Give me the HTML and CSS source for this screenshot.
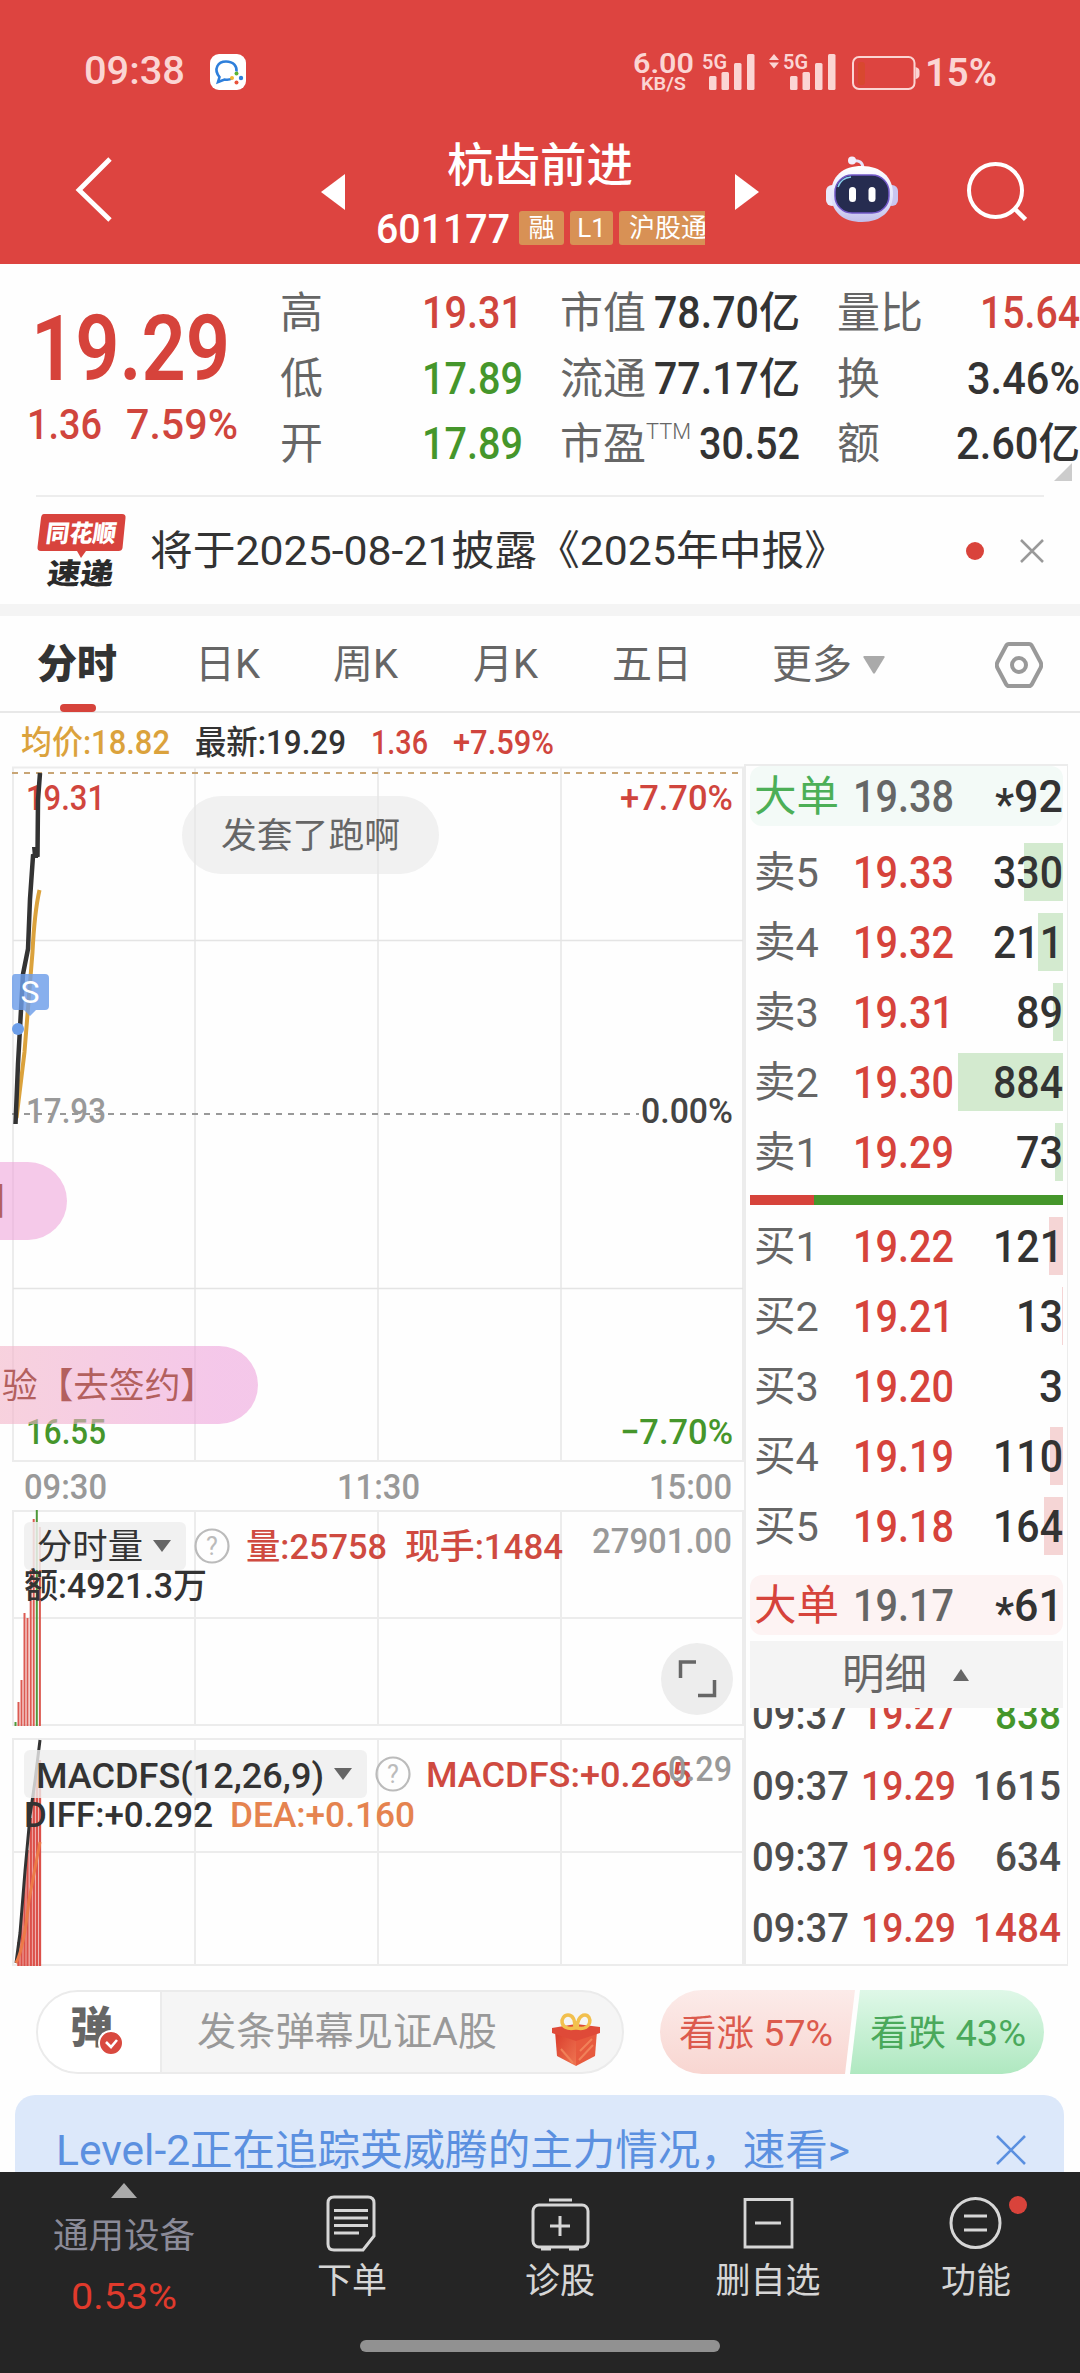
FILE: index.html
```html
<!DOCTYPE html>
<html lang="zh-CN">
<head>
<meta charset="utf-8">
<title>杭齿前进 601177</title>
<link rel="stylesheet" href="styles.css">
</head>
<body>
<header class="top">
  <div class="status">
    <span class="clock" data-w="101">09:38</span>
    <svg class="app-icon" viewBox="0 0 36 36"><rect width="36" height="36" rx="9" fill="#fff"/><path d="M22 24.500c-2 1.200-5 1.500-7.500 1L8 28l1.500-5C3 15 8 7.500 16 7.500c8 0 11 5 10.500 10" fill="none" stroke="#2e7fdb" stroke-width="2.600"/><circle cx="26.500" cy="19.500" r="2" fill="#5bb531"/><circle cx="31" cy="24" r="2.200" fill="#2e7fdb"/><circle cx="26.500" cy="28.500" r="2" fill="#e8523a"/><circle cx="22" cy="24" r="2" fill="#f2b632"/></svg>
    <svg class="signals" viewBox="630 46 370 50">
      <g fill="#fbd5d3" font-weight="600">
        <text x="633" y="73" font-size="28" textLength="61" lengthAdjust="spacingAndGlyphs">6.00</text>
        <text x="641" y="90" font-size="19" textLength="45" lengthAdjust="spacingAndGlyphs">KB/S</text>
        <text x="702" y="68.500" font-size="20.500" textLength="25" lengthAdjust="spacingAndGlyphs">5G</text>
        <text x="783" y="68.500" font-size="20.500" textLength="25" lengthAdjust="spacingAndGlyphs">5G</text>
        <text x="925" y="86" font-size="38" textLength="72" lengthAdjust="spacingAndGlyphs">15%</text>
        <rect x="709" y="76" width="7.500" height="14" rx="1.500"/><rect x="721.500" y="72" width="7.500" height="18" rx="1.500"/><rect x="734" y="63" width="7.500" height="27" rx="1.500"/><rect x="747" y="54" width="7.500" height="36" rx="1.500"/>
        <rect x="790" y="76" width="7.500" height="14" rx="1.500"/><rect x="802.500" y="72" width="7.500" height="18" rx="1.500"/><rect x="815" y="63" width="7.500" height="27" rx="1.500"/><rect x="828" y="54" width="7.500" height="36" rx="1.500"/>
        <path d="M769 60l5-6 5 6zM769 62.500l5 6 5-6z"/>
        <path d="M915.500 67q4 1 4 4v4q0 3-4 4z"/>
      </g>
      <rect x="853" y="57" width="61.500" height="32" rx="6" fill="none" stroke="#fbd5d3" stroke-width="2"/>
      <rect x="858" y="62" width="7" height="23" rx="3" fill="#d8482f"/>
    </svg>
  </div>
  <div class="nav">
    <svg class="back" viewBox="0 0 44 70"><path d="M40 5L9 36l31 30" fill="none" stroke="#fff" stroke-width="4.800"/></svg>
    <svg class="tri" viewBox="0 0 24 36"><path d="M24 0v36L0 18z" fill="#fff"/></svg>
    <div class="stock">
      <h1 data-w="186">杭齿前进</h1>
      <div class="sub"><span class="code" data-w="134">601177</span><i>融</i><i>L1</i><i class="cut">沪股通</i></div>
    </div>
    <svg class="tri right" viewBox="0 0 24 36"><path d="M0 0v36l24-18z" fill="#fff"/></svg>
    <svg class="robot" viewBox="0 0 72 68">
      <defs><linearGradient id="shell" x1="0" y1="0" x2="0" y2="1"><stop offset="0" stop-color="#fff"/><stop offset=".65" stop-color="#dfe0fa"/><stop offset="1" stop-color="#c1bdea"/></linearGradient></defs>
      <path d="M27 5c6-1 10 1 10 8" fill="none" stroke="#e6e4fa" stroke-width="3"/><circle cx="26" cy="4.500" r="4" fill="#f4eefc"/>
      <rect x="0" y="29" width="12" height="21" rx="6" fill="#e9e9fb"/><rect x="60" y="29" width="12" height="21" rx="6" fill="#c9c5f0"/>
      <path d="M36 10C55 10 67 21 67 38S55 66 36 66 5 56 5 38 17 10 36 10z" fill="url(#shell)"/>
      <rect x="9" y="19" width="54" height="38" rx="17" fill="#262c50" stroke="#7258c8" stroke-width="1.500"/>
      <path d="M12 31q3-9 13-10" fill="none" stroke="#8ad1ef" stroke-width="1.500"/>
      <rect x="23" y="31" width="7" height="15" rx="3.500" fill="#fff"/><rect x="42.500" y="31" width="7" height="15" rx="3.500" fill="#fff"/>
    </svg>
    <svg class="search" viewBox="0 0 62 62"><circle cx="30.500" cy="29.500" r="26.500" fill="none" stroke="#fff" stroke-width="4"/><path d="M50 48l10.500 10.500" stroke="#fff" stroke-width="4.500"/></svg>
  </div>
</header>

<section class="quote">
  <div class="last">
    <strong data-w="199">19.29</strong>
    <div class="change"><span data-w="75">1.36</span><span data-w="112">7.59%</span></div>
  </div>
  <div class="stats">
    <label>高</label><b class="up" data-w="101">19.31</b><label>市值</label><b data-w="146">78.70亿</b><label>量比</label><b class="up" data-w="100">15.64</b>
    <label>低</label><b class="down" data-w="101">17.89</b><label>流通</label><b data-w="146">77.17亿</b><label>换</label><b data-w="113">3.46%</b>
    <label>开</label><b class="down" data-w="101">17.89</b><label>市盈<sup data-w="45">TTM</sup></label><b data-w="101">30.52</b><label>额</label><b data-w="124">2.60亿</b>
  </div>
  <svg class="corner" viewBox="0 0 18 18"><path d="M18 0v18H0z" fill="#ccc"/></svg>
</section>

<section class="news">
  <svg class="logo" viewBox="0 0 90 74">
    <path d="M7 0h78q4 0 3.500 4l-3 30q-.5 3-4 3H49l-5 7-4-7H4q-4 0-3.500-4L4 4q.5-4 3-4z" fill="#d8433d"/>
    <g font-weight="900" text-anchor="middle" transform="skewX(-8)"><text x="47" y="28" font-size="24" fill="#fff" textLength="70" lengthAdjust="spacingAndGlyphs">同花顺</text><text x="52" y="70" font-size="29" fill="#2a2a2a" textLength="66" lengthAdjust="spacingAndGlyphs">速递</text></g>
  </svg>
  <p data-w="697">将于2025-08-21披露《2025年中报》</p>
  <svg class="dot" viewBox="0 0 18 18"><circle cx="9" cy="9" r="9" fill="#d9433b"/></svg>
  <svg class="close" viewBox="0 0 24 24"><path d="M1 1l22 22M23 1L1 23" stroke="#999" stroke-width="2.500"/></svg>
</section>

<nav class="tabs">
  <span class="on">分时</span><span>日K</span><span>周K</span><span>月K</span><span>五日</span>
  <span class="more">更多<svg viewBox="0 0 24 20"><path d="M2 1h20q1 0 .5 1.500L13 18q-1 1.500-2 0L1.500 2.500Q1 1 2 1z" fill="#aaa"/></svg></span>
  <svg class="gear" viewBox="0 0 48 46" fill="none" stroke="#999" stroke-width="4"><path d="M14 2h20q2 0 3 2l8.500 16q1.500 3 0 6L37 42q-1 2-3 2H14q-2 0-3-2L2.500 26q-1.500-3 0-6L11 4q1-2 3-2z"/><circle cx="24" cy="23" r="7"/></svg>
</nav>

<div class="info"><span class="avg" data-w="149">均价:18.82</span><span data-w="151">最新:19.29</span><span class="up" data-w="57">1.36</span><span class="up" data-w="101">+7.59%</span></div>

<main class="board">
  <div class="charts">
    <svg class="price" viewBox="0 764 744 743">
      <defs><linearGradient id="pink" gradientUnits="userSpaceOnUse" x1="0" y1="0" x2="220" y2="0"><stop offset="0" stop-color="#f3b4c8"/><stop offset="1" stop-color="#eea3dc"/></linearGradient></defs>
      <g stroke="#ececec" stroke-width="2" fill="none"><path d="M13 767.500h730V1461H13zM195 767v694M378 767v694M561 767v694"/><path d="M13 940.500h730M13 1288.500h730" stroke="#e4e4e4" stroke-width="1.500"/></g>
      <path d="M12 773h731" stroke="#c8a575" stroke-width="2" stroke-dasharray="6 6"/>
      <path d="M12 1114h627" stroke="#999" stroke-width="1.800" stroke-dasharray="6 6"/>
      <g font-size="35.500" font-weight="500">
        <text x="26" y="810" fill="#d0453d" textLength="79" lengthAdjust="spacingAndGlyphs">19.31</text>
        <text x="620" y="810" fill="#d0453d" textLength="113" lengthAdjust="spacingAndGlyphs">+7.70%</text>
        <text x="26" y="1123" fill="#999" textLength="80" lengthAdjust="spacingAndGlyphs">17.93</text>
        <text x="641" y="1123" fill="#444" textLength="92" lengthAdjust="spacingAndGlyphs">0.00%</text>
        <text x="26" y="1444" fill="#45962b" textLength="80" lengthAdjust="spacingAndGlyphs">16.55</text>
        <text x="620" y="1444" fill="#45962b" textLength="113" lengthAdjust="spacingAndGlyphs">−7.70%</text>
      </g>
      <g font-size="35.500" fill="#999" font-weight="500">
        <text x="24" y="1499" textLength="83" lengthAdjust="spacingAndGlyphs">09:30</text><text x="337" y="1499" textLength="83" lengthAdjust="spacingAndGlyphs">11:30</text><text x="649" y="1499" textLength="83" lengthAdjust="spacingAndGlyphs">15:00</text>
      </g>
      <path d="M39.500 890q-5 22-7 62l-8 100-8 66" fill="none" stroke="#dba23c" stroke-width="4"/>
      <path d="M15.500 1124l2.500-60 5-90 5-25 2-50 3-43 4.500-1L38 800l2-27" fill="none" stroke="#333" stroke-width="4.500"/>
      <path d="M32 847h6v11h-5z" fill="#333"/>
      <path d="M15 974h30q4 0 4 4v28q0 4-4 4h-9l-6 6-6-6h-9q-3 0-3-4v-28q0-4 3-4z" fill="#6c9ee9" fill-opacity=".82"/>
      <text x="30" y="1003" font-size="32" fill="#fff" text-anchor="middle">S</text><circle cx="18" cy="1029" r="6" fill="#6c9ee9"/>
      <rect x="182" y="796" width="257" height="78" rx="39" fill="#e8e8e8" fill-opacity=".6"/>
      <text x="221" y="848" font-size="35.700" fill="#666" textLength="179" lengthAdjust="spacingAndGlyphs">发套了跑啊</text>
      <g fill-opacity=".6"><rect x="-100" y="1162" width="167" height="78" rx="39" fill="#eea5db"/><rect x="-100" y="1346" width="358" height="78" rx="39" fill="url(#pink)"/></g>
      <g font-size="35.700" fill="#b3605e"><text x="-10" y="1214" font-weight="700">】</text><text x="2" y="1398" textLength="214" lengthAdjust="spacingAndGlyphs">验【去签约】</text></g>
    </svg>
    <svg class="volume" viewBox="0 1507 744 223">
      <path d="M13 1511h730v214H13zM195 1511v214M378 1511v214M561 1511v214M13 1618h730" stroke="#ececec" stroke-width="2" fill="none"/>
      <g stroke="#dc5a52" stroke-width="2"><path d="M18.500 1702v24M21.500 1680v46M24.500 1613v113M27.500 1618v108M30.700 1570v156M33.700 1519v207M39.900 1527v199"/><path d="M15.500 1722v4M36.800 1510v216" stroke="#4f983a"/></g>
      <rect x="24" y="1522" width="162" height="48" rx="6" fill="#eee" fill-opacity=".85"/>
      <text x="37" y="1559" font-size="35" fill="#333" textLength="106" lengthAdjust="spacingAndGlyphs">分时量</text>
      <path d="M153 1540h18l-9 12z" fill="#666"/>
      <circle cx="212" cy="1546" r="16.500" fill="none" stroke="#bbb" stroke-width="2.200"/><text x="212" y="1555" font-size="25" fill="#bbb" text-anchor="middle">?</text>
      <g font-size="35" font-weight="500"><text x="246" y="1559" fill="#cf4a40" textLength="141" lengthAdjust="spacingAndGlyphs">量:25758</text><text x="405" y="1559" fill="#cf4a40" textLength="158" lengthAdjust="spacingAndGlyphs">现手:1484</text>
      <text x="592" y="1553" fill="#999" textLength="140" lengthAdjust="spacingAndGlyphs">27901.00</text><text x="24" y="1598" fill="#333" textLength="183" lengthAdjust="spacingAndGlyphs">额:4921.3万</text></g>
      <circle cx="697" cy="1679" r="36" fill="#ededed"/><path d="M680.500 1678v-16H696M698 1695.500h16.500V1680" fill="none" stroke="#666" stroke-width="3.500"/>
    </svg>
    <svg class="macd" viewBox="0 1730 744 238">
      <path d="M13 1739h730v226H13zM195 1739v226M378 1739v226M561 1739v226M13 1852h730" stroke="#ececec" stroke-width="2" fill="none"/>
      <path d="M18.500 1942v24M21.500 1913v53M24.500 1877v89M27.500 1850v116M30.700 1818v148M33.700 1790v176M36.800 1770v196M39.900 1760v206" stroke="#dc5049" stroke-width="2.500"/>
      <path d="M16 1963l4-30 5-62 5-55 5-35 5-41" fill="none" stroke="#333" stroke-width="3"/><path d="M16 1963q8-15 13-63l11-58" fill="none" stroke="#ec7a48" stroke-width="3"/>
      <rect x="24" y="1750" width="343" height="48" rx="6" fill="#eee" fill-opacity=".8"/>
      <path d="M334 1768h18l-9 12z" fill="#666"/>
      <circle cx="393" cy="1774" r="16.500" fill="none" stroke="#bbb" stroke-width="2.200"/><text x="393" y="1783" font-size="25" fill="#bbb" text-anchor="middle">?</text>
      <g font-size="35.500" font-weight="500"><text x="36" y="1787.500" fill="#333" textLength="288" lengthAdjust="spacingAndGlyphs">MACDFS(12,26,9)</text><text x="426" y="1787" fill="#cf4a40" textLength="266" lengthAdjust="spacingAndGlyphs">MACDFS:+0.265</text>
      <text x="668" y="1781" fill="#999" textLength="64" lengthAdjust="spacingAndGlyphs">0.29</text><text x="24" y="1827" fill="#333" textLength="189" lengthAdjust="spacingAndGlyphs">DIFF:+0.292</text><text x="230" y="1827" fill="#e5834f" textLength="185" lengthAdjust="spacingAndGlyphs">DEA:+0.160</text></g>
    </svg>
  </div>
  <aside class="book">
    <div class="row big sell"><span>大单</span><b data-w="101">19.38</b><em data-w="68"><s>*</s>92</em></div>
    <div class="asks">
      <div class="row"><span>卖5</span><b data-w="101">19.33</b><em data-w="70">330</em><i style="width:39px"></i></div>
      <div class="row"><span>卖4</span><b data-w="101">19.32</b><em data-w="70">211</em><i style="width:25px"></i></div>
      <div class="row"><span>卖3</span><b data-w="101">19.31</b><em data-w="47">89</em><i style="width:10px"></i></div>
      <div class="row"><span>卖2</span><b data-w="101">19.30</b><em data-w="70">884</em><i style="width:105px"></i></div>
      <div class="row"><span>卖1</span><b data-w="101">19.29</b><em data-w="47">73</em><i style="width:8px"></i></div>
    </div>
    <div class="ratio"></div>
    <div class="bids">
      <div class="row"><span>买1</span><b data-w="101">19.22</b><em data-w="70">121</em><i style="width:14px"></i></div>
      <div class="row"><span>买2</span><b data-w="101">19.21</b><em data-w="47">13</em><i style="width:1px"></i></div>
      <div class="row"><span>买3</span><b data-w="101">19.20</b><em data-w="24">3</em><i style="width:0"></i></div>
      <div class="row"><span>买4</span><b data-w="101">19.19</b><em data-w="70">110</em><i style="width:13px"></i></div>
      <div class="row"><span>买5</span><b data-w="101">19.18</b><em data-w="70">164</em><i style="width:19px"></i></div>
    </div>
    <div class="row big buy"><span>大单</span><b data-w="101">19.17</b><em data-w="68"><s>*</s>61</em></div>
    <div class="detail">明细<svg viewBox="0 0 16 12"><path d="M8 0l8 12H0z" fill="#666"/></svg></div>
    <div class="ticks">
      <div><span data-w="97">09:37</span><b data-w="95">19.27</b><em class="down" data-w="66">838</em></div>
      <div><span data-w="97">09:37</span><b data-w="95">19.29</b><em data-w="88">1615</em></div>
      <div><span data-w="97">09:37</span><b data-w="95">19.26</b><em data-w="66">634</em></div>
      <div><span data-w="97">09:37</span><b data-w="95">19.29</b><em class="up" data-w="88">1484</em></div>
    </div>
  </aside>
</main>

<section class="barrage">
  <div class="input">
    <div class="toggle">弹<svg viewBox="0 0 26 26"><circle cx="13" cy="13" r="12" fill="#d9493f" stroke="#fff" stroke-width="2"/><path d="M8 12l5 5 6-7" fill="none" stroke="#fff" stroke-width="2.600"/></svg></div>
    <p data-w="300">发条弹幕见证A股</p>
    <svg class="gift" viewBox="0 0 48 54">
      <defs><linearGradient id="box" x1="0" y1="0" x2="1" y2="1"><stop offset="0" stop-color="#d93b2b"/><stop offset="1" stop-color="#ee7551"/></linearGradient></defs>
      <path d="M3 18l21 8v27L5 43z" fill="url(#box)"/><path d="M45 18l-21 8v27l19-10z" fill="#e75a3e"/>
      <path d="M0 15l24-4 24 3v6l-24 8L0 20z" fill="#df4a38"/><path d="M9 36l12 14M28 38l12-12M27 47l14-15" stroke="#f18159" stroke-width="2"/>
      <path d="M23 15C6 18 8 2 16 2c6 0 7 8 7 13zm2 0c16 3 15-13 8-13-6 0-8 8-8 13z" fill="none" stroke="#f2c04e" stroke-width="3.500"/>
    </svg>
  </div>
  <div class="poll">
    <svg viewBox="0 0 384 84">
      <defs><linearGradient id="r" x1="0" y1="0" x2="0" y2="1"><stop offset="0" stop-color="#fcebe9"/><stop offset="1" stop-color="#f8d6d1"/></linearGradient><linearGradient id="g" x1="0" y1="0" x2="0" y2="1"><stop offset="0" stop-color="#dff8e8"/><stop offset="1" stop-color="#afe8c0"/></linearGradient></defs>
      <path d="M42 0h153l-10 84H42a42 42 0 0 1 0-84z" fill="url(#r)"/><path d="M200 0h142a42 42 0 0 1 0 84H190z" fill="url(#g)"/>
      <text x="19" y="56" font-size="36" fill="#dc5a4d" textLength="154" lengthAdjust="spacingAndGlyphs">看涨 57%</text><text x="210" y="56" font-size="36" fill="#4aa95b" textLength="156" lengthAdjust="spacingAndGlyphs">看跌 43%</text>
    </svg>
  </div>
</section>

<div class="banner"><p data-w="794">Level-2正在追踪英威腾的主力情况，速看&gt;</p><svg viewBox="0 0 30 30"><path d="M1 1l28 28M29 1L1 29" stroke="#5b90e0" stroke-width="2.600"/></svg></div>

<footer class="dock">
  <div class="items">
    <div class="sector"><svg viewBox="0 0 26 15"><path d="M13 0l13 15H0z" fill="#aaa"/></svg><span>通用设备</span><b data-w="106">0.53%</b></div>
    <div class="item"><svg viewBox="0 0 64 64" fill="none" stroke="#d6d6d6" stroke-width="3"><path d="M14 5h34q6 0 6 6v33l-11 14H14q-6 0-6-6V11q0-6 6-6zM14 18.500h34M14 26h34M14 33.500h34M14 41h25"/></svg><span>下单</span></div>
    <div class="item"><svg viewBox="0 0 64 64" fill="none" stroke="#d6d6d6" stroke-width="3"><rect x="5" y="13" width="55" height="42" rx="6"/><path d="M21 8h23M32 24v20M22 34h20M13 57h10M41 57h10"/></svg><span>诊股</span></div>
    <div class="item"><svg viewBox="0 0 64 64" fill="none" stroke="#d6d6d6" stroke-width="2.800"><path d="M9 7.500h47v47.500H9zM19 31h26"/></svg><span>删自选</span></div>
    <div class="item"><svg viewBox="0 0 64 64" fill="none" stroke="#d6d6d6" stroke-width="3"><circle cx="31.500" cy="31" r="24.500"/><path d="M20 24h23M20 38h23"/></svg><span>功能</span><u></u></div>
  </div>
  <div class="home"></div>
</footer>
<script src="fit.js"></script>
</body>
</html>
```
FILE: styles.css
```css
* { box-sizing: border-box; margin: 0; padding: 0; }
body { width: 1080px; height: 2373px; overflow: hidden; background: #fefefe; color: #333; font-family: Roboto, "Noto Sans CJK SC", sans-serif; line-height: 1; }
svg { display: block; flex: none; overflow: hidden; }
b, em, i, u, s, strong, h1 { font-style: normal; font-weight: 500; text-decoration: none; }
[data-w] { display: block; flex: none; white-space: pre; transform-origin: left center; }
.up { color: #d0453d !important; }
.down { color: #45962b !important; }

.top { height: 264px; background: #dd4440; color: #fff; }
.status { height: 122px; padding: 50px 0 0 84px; display: flex; }
.clock { font-size: 38px; line-height: 43px; font-weight: 500; color: #fbd5d3; }
.app-icon { width: 36px; height: 36px; margin: 4px 0 0 25px; }
.signals { width: 370px; height: 50px; margin: -4px 0 0 384px; }
.nav { display: flex; height: 142px; padding-left: 70px; align-items: flex-start; }
.back { width: 44px; height: 70px; margin-top: 32px; }
.tri { width: 24px; height: 36px; margin: 52px 0 0 207px; }
.tri.right { margin-left: 30px; }
.stock { width: 360px; padding: 19px 0 0 31px; }
.stock h1 { font-size: 46px; line-height: 48px; margin-left: 71px; }
.sub { display: flex; align-items: center; height: 44px; margin-top: 17px; overflow: hidden; width: 329px; }
.code { font-size: 41px; line-height: 44px; font-weight: 500; padding-top: 1px; }
.sub i { flex: none; height: 34px; margin-left: 6px; border-radius: 3px; background: #d89155; font-size: 26px; line-height: 34px; width: 43px; text-align: center; font-weight: 400; }
.sub .code + i { margin-left: 9px; width: 45px; }
.sub .cut { width: 100px; text-align: left; padding-left: 10px; }
.robot { width: 72px; height: 68px; margin: 34px 0 0 67px; }
.search { width: 62px; height: 62px; margin: 39px 0 0 67px; }

.quote { height: 233px; display: flex; position: relative; }
.quote::after { content: ""; position: absolute; left: 36px; right: 36px; bottom: 0; height: 2px; background: #ededed; }
.last { width: 280px; padding: 38px 0 0 31px; color: #d6433b; }
.last strong { font-size: 91px; line-height: 94px; font-weight: 600; }
.change { display: flex; gap: 24px; margin: 6px 0 0 -4px; font-size: 43px; line-height: 44px; font-weight: 500; color: #d0453d; }
.stats { display: grid; grid-template-columns: 20px 223px 58px 219px 58px 222px; grid-auto-rows: 65.500px; padding-top: 17px; width: 800px; align-items: center; }
.stats label { font-size: 43px; line-height: 65px; color: #666; display: flex; white-space: nowrap; width: 0; }
.stats label:nth-of-type(3n+2), .stats label:nth-of-type(3n) { margin-left: 37px; }
.stats label sup { font-size: 22px; line-height: 40px; font-weight: 300; }
.stats b { font-size: 43.500px; line-height: 65px; justify-self: end; }
.corner { position: absolute; left: 1054px; top: 199px; width: 18px; height: 18px; }

.news { height: 107px; display: flex; align-items: center; padding-left: 37px; }
.logo { width: 90px; height: 74px; }
.news p { margin-left: 23px; font-size: 41px; line-height: 60px; }
.news .dot { width: 18px; height: 18px; margin-left: 119px; }
.news .close { width: 24px; height: 24px; margin-left: 36px; }

.tabs { border-top: 12px solid #f4f4f4; border-bottom: 2px solid #e8e8e8; height: 109px; display: grid; grid-template-columns: 158px 138px 140px 139px 160px 223px 48px; padding-left: 37px; align-items: center; font-size: 40px; color: #666; line-height: 97px; }
.tabs span { position: relative; }
.tabs .on { color: #333; font-weight: 800; }
.tabs .on::after { content: ""; position: absolute; left: 23px; bottom: 1px; width: 36px; height: 8px; border-radius: 4px; background: #d6433b; }
.more { display: flex; align-items: center; gap: 10px; }
.more svg { width: 24px; height: 20px; }
.gear { width: 48px; height: 46px; }

.info { height: 51px; display: flex; gap: 25px; padding-left: 21px; font-size: 33px; line-height: 59px; font-weight: 500; }
.avg { color: #dba23c; }

.board { height: 1204px; display: grid; grid-template-columns: 744px 324px; }
.charts svg { width: 744px; }
.price { height: 743px; }
.volume { height: 223px; }
.macd { height: 238px; }

.book { border: 2px solid #ececec; border-right-width: 1px; height: 1202px; padding: 0 4px; overflow: hidden; }
.row { position: relative; height: 58px; margin-bottom: 12px; display: flex; align-items: center; font-size: 44px; line-height: 58px; }
.row span { width: 103px; padding: 2px 0 0 4px; font-size: 41.500px; color: #666; white-space: nowrap; flex: none; }
.row b { color: #d6433b; z-index: 1; padding-top: 2px; }
.row em { margin-left: auto; z-index: 1; color: #333; order: 3; padding-top: 2px; }
.row s { position: relative; top: 8px; }
.row i { position: absolute; right: 0; top: 0; height: 58px; background: #d3eacf; }
.row.big { height: 60px; margin: 0 0 17px; border-radius: 12px; background: #f3faf7; }
.row.big b { color: #666; }
.row.big span { color: #4caf57; font-size: 42.500px; }
.row.big.buy { background: #fdf3f3; margin-bottom: 6px; }
.row.big.buy span { color: #d6433b; }
.bids i { background: #f5d5d5; }
.ratio { height: 10px; margin: 14px 0 12px; background: linear-gradient(90deg, #d6433b 64px, #45962b 64px); }
.bids { margin-bottom: 20px; }
.detail { height: 67px; background: #f4f4f4; color: #666; font-size: 42.500px; line-height: 71px; display: flex; align-items: center; padding-left: 92px; gap: 26px; }
.detail svg { width: 16px; height: 12px; }
.ticks { height: 256px; overflow: hidden; }
.ticks div { height: 71px; display: flex; align-items: center; padding: 0 2px; font-size: 41px; line-height: 71px; }
.ticks div:first-child { margin-top: -28px; }
.ticks span, .ticks em { color: #4d4d4d; font-weight: 500; }
.ticks b { color: #d0453d; margin-left: 12px; }
.ticks em { margin-left: auto; }

.barrage { height: 127px; padding: 22px 36px 0; display: flex; }
.input { width: 588px; height: 84px; border: 2px solid #ebebeb; border-radius: 42px; background: #f5f5f5; display: flex; align-items: center; overflow: hidden; }
.toggle { position: relative; width: 124px; height: 84px; background: #fff; border-right: 2px solid #ebebeb; font-size: 43px; line-height: 76px; font-weight: 900; color: #666; padding-left: 32px; flex: none; }
.toggle svg { position: absolute; left: 60px; top: 40px; width: 26px; height: 26px; }
.input p { font-size: 39px; line-height: 82px; color: #999; margin-left: 35px; }
.gift { width: 48px; height: 54px; margin: 16px 0 0 55px; }
.poll svg { width: 384px; height: 84px; margin-left: 36px; }

.banner { height: 77px; margin: 0 16px 0 15px; border-radius: 20px 20px 0 0; background: #dce8fa; color: #5b90e0; display: flex; padding-left: 41px; overflow: hidden; }
.banner p { font-size: 42px; line-height: 112px; }
.banner svg { width: 30px; height: 30px; margin: 40px 0 0 146px; }

.dock { position: relative; height: 201px; background: #252525; }
.items { display: grid; grid-template-columns: 248px repeat(4, 208px); height: 168px; }
.sector, .item { display: flex; flex-direction: column; align-items: center; }
.sector svg { width: 26px; height: 15px; margin-top: 11px; }
.sector span { font-size: 35.500px; line-height: 40px; margin-top: 18px; color: #8b8b99; }
.sector b { font-size: 37px; line-height: 40px; margin-top: 21px; color: #e03a2c; font-weight: 400; }
.item { position: relative; }
.item svg { width: 64px; height: 64px; margin-top: 20px; }
.item span { font-size: 35px; line-height: 40px; margin-top: 6px; color: #d6d6d6; }
.item u { position: absolute; left: 137px; top: 24px; width: 18px; height: 18px; border-radius: 50%; background: #d9433b; }
.home { width: 360px; height: 12px; border-radius: 6px; margin: 0 auto; background: #919191; }
```
FILE: fit.js
```js
// Condenses each label to its column width, as the narrow UI typeface would.
document.querySelectorAll('[data-w]').forEach(function (el) {
  var target = Number(el.dataset.w);
  el.style.width = 'max-content';
  var natural = el.getBoundingClientRect().width;
  el.style.transform = 'scaleX(' + target / natural + ')';
  el.style.width = target + 'px';
  el.style.transformOrigin = '0 50%';
});
```
